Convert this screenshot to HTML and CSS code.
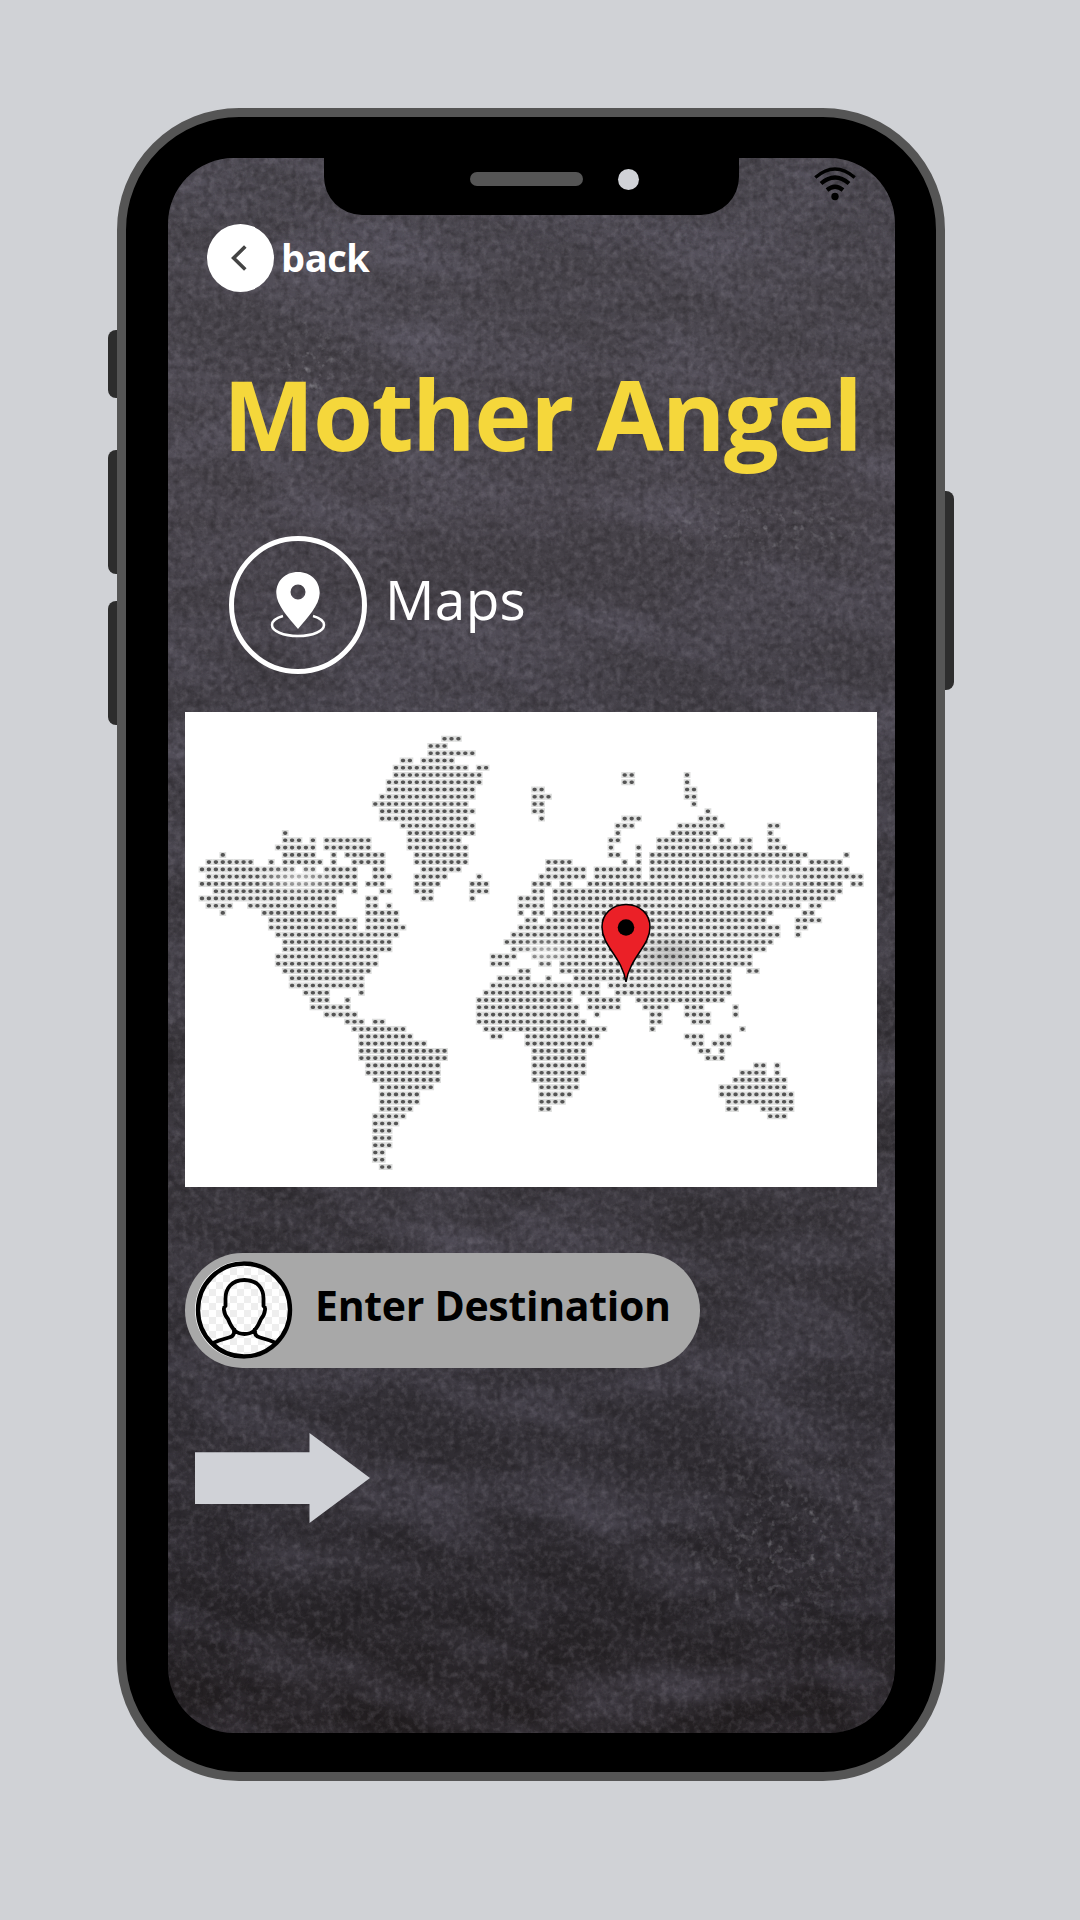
FILE: index.html
```html
<!DOCTYPE html>
<html lang="en">
<head>
<meta charset="utf-8">
<title>Mother Angel</title>
<link rel="stylesheet" href="styles.css">
</head>
<body>
<main class="phone">
  <i class="key key-mute"></i><i class="key key-up"></i><i class="key key-down"></i><i class="key key-power"></i>
  <div class="screen">
    <svg class="board" width="728" height="1576" aria-hidden="true">
      <defs>
        <filter id="grain" x="0" y="0" width="100%" height="100%" color-interpolation-filters="sRGB">
          <feTurbulence type="fractalNoise" baseFrequency="0.15" numOctaves="4" seed="4"/>
          <feColorMatrix values="0 0 0 0 .62  0 0 0 0 .6  0 0 0 0 .64  .9 0 0 0 -.38"/>
        </filter>
        <filter id="dust" x="0" y="0" width="100%" height="100%" color-interpolation-filters="sRGB">
          <feTurbulence type="fractalNoise" baseFrequency="0.006 0.016" numOctaves="6" seed="11"/>
          <feColorMatrix values="0 0 0 0 .5  0 0 0 0 .48  0 0 0 0 .56  1.6 0 0 0 -.7"/>
        </filter>
        <filter id="speck" x="0" y="0" width="100%" height="100%" color-interpolation-filters="sRGB">
          <feTurbulence type="fractalNoise" baseFrequency="0.12" numOctaves="3" seed="31"/>
          <feColorMatrix values="0 0 0 0 .7  0 0 0 0 .7  0 0 0 0 .72  3 0 0 0 -1.8"/>
        </filter>
        <filter id="shade" x="0" y="0" width="100%" height="100%" color-interpolation-filters="sRGB">
          <feTurbulence type="fractalNoise" baseFrequency="0.14" numOctaves="3" seed="23"/>
          <feColorMatrix values="0 0 0 0 .08  0 0 0 0 .07  0 0 0 0 .08  1.1 0 0 0 -.45"/>
        </filter>
        <radialGradient id="fade"><stop stop-color="#fff"/><stop offset="1" stop-color="#000"/></radialGradient>
        <mask id="patches">
          <ellipse cx="610" cy="1380" rx="150" ry="130" fill="url(#fade)"/>
          <ellipse cx="590" cy="370" rx="160" ry="60" fill="url(#fade)"/>
          <ellipse cx="140" cy="210" rx="70" ry="90" fill="url(#fade)"/>
        </mask>
      </defs>
      <rect width="728" height="1576" filter="url(#dust)" opacity=".35"/>
      <g transform="rotate(24 364 788)"><rect x="-400" y="-200" width="1500" height="2000" filter="url(#dust)" opacity=".35"/></g>
      <rect width="728" height="1576" filter="url(#grain)" opacity=".55"/>
      <rect width="728" height="1576" filter="url(#shade)" opacity=".6"/>
      <g mask="url(#patches)"><rect width="728" height="1576" filter="url(#speck)" opacity=".6"/></g>
    </svg>
    <header class="status">
      <div class="notch"><i class="speaker"></i><i class="camera"></i></div>
      <svg class="wifi" width="42" height="34" viewBox="0 0 42 34" fill="none" stroke="#000" stroke-width="3.400" stroke-linecap="butt">
        <path d="M1.300 10.500Q21-6.500 40.700 10.500"/><path d="M7 16.500Q21 4.500 35 16.500" stroke-width="4.200"/><path d="M13 23Q21 16.500 29 23" stroke-width="4.200"/>
        <circle cx="21" cy="29.500" r="3.700" fill="#000" stroke="none"/>
      </svg>
    </header>
    <nav class="back">
      <span class="back-button"><svg width="16" height="26" viewBox="0 0 16 26" fill="none" stroke="#444" stroke-width="3.600"><path d="M14.300 1.500 2.600 13l11.700 11.500"/></svg></span>
      <span class="back-label">back</span>
    </nav>
    <h1 class="title">Mother Angel</h1>
    <section class="heading">
      <svg width="138" height="138" viewBox="0 0 138 138">
        <circle cx="69" cy="69" r="66.500" fill="none" stroke="#fff" stroke-width="5"/>
        <path d="M54 80C47 82 43 85 43 89C43 95 54 100 69 100S95 95 95 89C95 85 91 82 84 80" fill="none" stroke="#fff" stroke-width="2.500"/>
        <path fill="#fff" fill-rule="evenodd" d="M69 36C56 36 47.300 45 47.300 57C47.300 69 60 82 69 93C78 82 90.700 69 90.700 57C90.700 45 82 36 69 36ZM69 48.500a7.500 7.500 0 1 1 0 15a7.500 7.500 0 1 1 0-15Z"/>
      </svg>
      <h2 class="heading-label">Maps</h2>
    </section>
    <figure class="map">
      <svg width="692" height="475" viewBox="185 712 692 475">
        <defs>
          <radialGradient id="light"><stop stop-color="#fff" stop-opacity=".6"/><stop offset="1" stop-color="#fff" stop-opacity="0"/></radialGradient>
          <radialGradient id="dark"><stop stop-color="#444" stop-opacity=".28"/><stop offset="1" stop-color="#444" stop-opacity="0"/></radialGradient>
        </defs>
        <path class="halo"/><path class="dots"/>
        <ellipse cx="298" cy="879" rx="42" ry="16" fill="url(#light)"/>
        <ellipse cx="770" cy="880" rx="42" ry="16" fill="url(#light)"/>
        <ellipse cx="545" cy="952" rx="34" ry="14" fill="url(#light)"/>
        <ellipse cx="671" cy="955" rx="44" ry="22" fill="url(#dark)"/>
        <path d="M626 982C622 957 602 946 602 927C602 914 612 904.500 626 904.500S650 914 650 927C650 946 630 957 626 982Z" fill="#eb2027" stroke="#000" stroke-width="1.500"/>
        <circle cx="626" cy="927.500" r="8.300"/>
      </svg>
    </figure>
    <div class="destination">
      <svg width="98" height="98" viewBox="0 0 98 98">
        <defs>
          <pattern id="check" width="14" height="14" patternUnits="userSpaceOnUse"><path fill="#fff" d="M0 0h14v14H0z"/><path fill="#eee" d="M0 0h7v7H0zM7 7h7v7H7z"/></pattern>
        </defs>
        <ellipse cx="48" cy="49" rx="48" ry="49" fill="#fff"/>
        <ellipse cx="49" cy="49" rx="46" ry="46.500" fill="url(#check)" stroke="#000" stroke-width="4.400"/>
        <path fill="none" stroke="#000" stroke-width="3.800" stroke-linejoin="round" d="M49.500 19C37 19 30 27 30.500 39L30.500 45Q28.500 46 29 49Q29.500 54 33 58C37 68 41 73 49.500 73S62 68 66 58Q69.500 54 70 49Q70.500 46 68.500 45L68.500 39C69 27 62 19 49.500 19ZM39 67V72Q38.500 75.500 34 76.500L24 79.500L18 82M60 67V72Q60.500 75.500 65 76.500L75 79.500L81 82"/>
      </svg>
      <span class="destination-label">Enter Destination</span>
    </div>
    <svg class="go" width="175" height="90" viewBox="0 0 175 90"><path fill="#d0d2d7" d="M0 19.300H114.500V0L175 45L114.500 90V71H0Z"/></svg>
  </div>
</main>
<script src="map.js"></script>
</body>
</html>
```
FILE: styles.css
```css
* { box-sizing: border-box; }
body {
  margin: 0;
  width: 1080px;
  height: 1920px;
  overflow: hidden;
  background: #d0d2d6;
  font-family: "Open Sans", "Noto Sans", sans-serif;
}
.phone {
  position: relative;
  width: 828px;
  height: 1673px;
  margin: 108px 0 0 117px;
  padding: 41px 42px;
  border: 9px solid #555;
  border-radius: 122px;
  background: #000;
}
.screen {
  position: relative;
  width: 727px;
  height: 1575px;
  overflow: hidden;
  border-radius: 66px;
  background: linear-gradient(#48454c 0%, #464249 22%, #3f3c43 40%, #363338 60%, #322f35 80%, #282529 92%, #221e20 100%);
}
.board { position: absolute; left: 0; top: 0; }
.status { position: relative; display: flex; height: 57px; padding-left: 156px; }
.notch {
  display: flex;
  align-items: center;
  width: 415px;
  height: 57px;
  padding: 0 0 15px 146px;
  gap: 35px;
  border-radius: 0 0 38px 38px;
  background: #000;
}
.speaker { width: 113px; height: 14px; border-radius: 7px; background: #555; }
.camera { width: 21px; height: 21px; border-radius: 50%; background: #d0d2d7; }
.wifi { margin: 9px 0 0 75px; }
.back { position: relative; display: flex; align-items: center; height: 68px; margin: 9px 0 0 39px; gap: 7px; }
.back-button {
  display: flex;
  align-items: center;
  justify-content: center;
  width: 67px;
  height: 68px;
  padding-right: 4px;
  border-radius: 50%;
  background: #fff;
}
.back-label { color: #fff; font-size: 38px; font-weight: 700; line-height: 66px; letter-spacing: -0.4px; padding-bottom: 2px; }
.title { position: relative; margin: 55px 0 0 55px; color: #f5d73b; font-size: 97px; font-weight: 700; line-height: 132px; letter-spacing: -1.5px; white-space: nowrap; }
.heading { position: relative; display: flex; height: 138px; margin: 57px 0 0 61px; gap: 17px; }
.heading-label { margin: 0; color: #fff; font-size: 55px; font-weight: 400; line-height: 126px; letter-spacing: 0.3px; padding-left: 1px; }
.map { position: relative; height: 475px; width: 692px; margin: 38px 0 0 17px; background: #fff; }
.map svg { display: block; }
.halo, .dots { fill: none; }
.halo { stroke: #8b8f8c; stroke-opacity: .3; stroke-width: 6px; stroke-linecap: square; }
.dots { stroke: #3c3c3c; stroke-opacity: .85; stroke-width: 3.6px; stroke-linecap: round; }
.destination {
  position: relative;
  display: flex;
  align-items: center;
  width: 515px;
  height: 115px;
  margin: 66px 0 0 17px;
  padding: 0 0 2px 10px;
  gap: 22px;
  border-radius: 58px;
  background: #a8a8a8;
}
.destination-label { color: #000; font-size: 41px; font-weight: 700; line-height: 60px; letter-spacing: -0.3px; white-space: nowrap; padding-bottom: 9px; }
.go { position: relative; display: block; margin: 65px 0 0 27px; }
.key { position: absolute; width: 9px; background: #2d2d2d; border-radius: 8px 0 0 8px; left: -18px; }
.key-mute { top: 213px; height: 68px; }
.key-up { top: 333px; height: 124px; }
.key-down { top: 484px; height: 124px; }
.key-power { top: 374px; height: 199px; left: auto; right: -18px; border-radius: 0 8px 8px 0; }
```
FILE: map.js
```js
// Land cells of the dotted world map: one string per row, inclusive column runs.
const rows = `35-37
33-35
33-39
29-30,32-36
28-38,40-41
28-40,61-62,70
27-40,61-62,70
27-39,48-49,70-71
26-39,48-50,70-71
25-38,48-49,71
26-39,48-49,73
26-38,49,61-63,72-74
29-39,60-62,69-75,82-83
12,30-39,60,68-74,82
12-14,16,18-24,30-37,59-60,66-73,75-76,78-79,82-83
11-16,18-24,30-38,59,63,66-79,82-84
3,12-16,19,21-26,31-38,59-60,63,65-87,93
1-7,10,12-17,19,22-26,31-38,50-53,61,63,65-86,88-92
0-13,15-16,18-22,25-26,32-37,50-55,57-63,65-93
1-22,25-27,31-35,40,49-55,57-63,65-95
0-22,24-26,31-34,39-41,48-50,52-53,56-92,94-95
2-20,22,26-27,31-33,39-41,48-49,51-92
0-19,24-25,32-33,39,46-49,51-91
1-4,7-19,24-25,27,46-49,51-86,88-89
3,9-19,24-28,46,48-49,51-82,87-88
10-22,24-28,47-48,50-81,86-89
10-22,24-29,46-83,86-87
11-28,45-83,86
12-27,44-82
12-27,45-81
11-25,42-45,48-79
11-25,42-44,49-50,52-79
12-24,46-47,52-76,79-80
13-23,43-47,50,54-76
13-23,42-57,59-76
15-18,23,41-53,55-57,60-76
16-18,21,40-53,56-60,63-75
16-21,40-54,56-60,64-67,70-72,77
18-22,40-54,57,65-66,70-73,77
21-23,25-26,40-55,65-66,71-73
22-29,41-58,65,78
23-30,42-43,47-57,70-72,75-76
23-32,47-56,71-72,74-76
23-35,48-55,72-73,75
23-35,48-55,73-75
24-34,48-55,80-81,83
24-34,48-55,78-81,83
25-34,48-54,77-84
26-33,49-54,75-84
26-31,49-53,75-85
26-31,49-52,76-85
26-30,49-50,76-77,81-85
25-29,82-84
25-28
25-27
25-27
25-27
25-26
25-26
26-27`.split("\n");

let d = "";
rows.forEach((row, r) => row.split(",").forEach(run => {
  const [from, to = from] = run.split("-").map(Number);
  for (let c = from; c <= to; c++) {
    d += `M${(201.6 + c * 6.93).toFixed(1)} ${(738.7 + r * 7.26).toFixed(1)}h.8`;
  }
}));
document.querySelector(".halo").setAttribute("d", d);
document.querySelector(".dots").setAttribute("d", d);
```
